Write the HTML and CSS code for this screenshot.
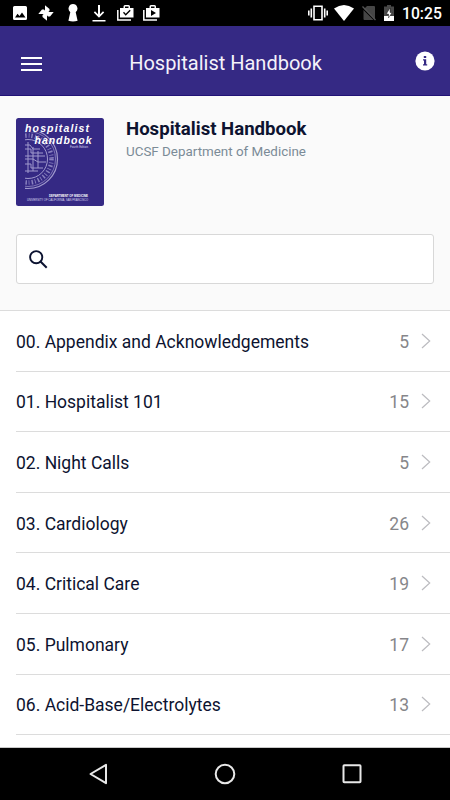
FILE: index.html
```html
<!DOCTYPE html>
<html lang="en">
<head>
<meta charset="utf-8">
<title>Hospitalist Handbook</title>
<link rel="stylesheet" href="styles.css">
</head>
<body>
<div class="status">
  <div class="status-left">
    <svg width="14" height="14" viewBox="0 0 14 14"><path fill="#fff" fill-rule="evenodd" d="M1.500 0h11A1.500 1.500 0 0 1 14 1.500v11a1.500 1.500 0 0 1-1.500 1.500h-11A1.500 1.500 0 0 1 0 12.500v-11A1.500 1.500 0 0 1 1.500 0zM2 11.500h10.500L9 6.500 6.500 10 4.500 7.800z"/></svg>
    <svg width="16" height="16" viewBox="0 0 16 16"><g fill="#fff"><path id="vane" d="M8.500 8.500H7V.3L11.500 4v2z"/><use href="#vane" transform="rotate(90 8 8)"/><use href="#vane" transform="rotate(180 8 8)"/><use href="#vane" transform="rotate(270 8 8)"/></g></svg>
    <svg width="10" height="18" viewBox="0 0 10 18"><path fill="#fff" d="M5 0a4.600 4.600 0 0 1 2.700 8.200L9.600 16.800Q5 18.300.4 16.800L2.300 8.200A4.600 4.600 0 0 1 5 0z"/></svg>
    <svg width="14" height="17" viewBox="0 0 14 17"><path fill="#fff" d="M6 0h2v9.200l3-2.900 1.200 1.200L7 12.700 1.800 7.500 3 6.300l3 2.900zM.5 15h13v1.500H.5z"/></svg>
    <svg width="17" height="16" viewBox="0 0 17 16"><path fill="#fff" fill-rule="evenodd" d="M3 3h3.500V1.500Q6.500 0 8 0h3.500Q13 0 13 1.500V3h3.500v9.500H3zM8 3h3.500V1.500H8zM6 7.800l2.700 3 5-5-1-1-4 4-1.700-2z"/><path d="M.8 5v10H14" fill="none" stroke="#fff" stroke-width="1.500"/></svg>
    <svg width="17" height="16" viewBox="0 0 17 16"><path fill="#fff" fill-rule="evenodd" d="M3 3h3.500V1.500Q6.500 0 8 0h3.500Q13 0 13 1.500V3h3.500v9.500H3zM8 3h3.500V1.500H8zM8 5v6l5-3z"/><path d="M.8 5v10H14" fill="none" stroke="#fff" stroke-width="1.500"/></svg>
  </div>
  <div class="status-right">
    <svg width="20" height="16" viewBox="0 0 20 16"><path fill="none" stroke="#fff" stroke-width="1.600" d="M6 1.300h8v13.400H6zM3.300 3.500v9M16.700 3.500v9M.8 5.500v5M19.200 5.500v5"/></svg>
    <svg width="20" height="16" viewBox="0 0 20 16"><path fill="#fff" d="M10 16 0 3.600Q10-3.400 20 3.600z"/></svg>
    <svg width="14" height="16" viewBox="0 0 14 16"><path fill="#464646" d="M5 1h7q1 0 1 1v12L2 4zM1.500 5 11.500 15h-9q-1 0-1-1z"/><path d="M.5 1.500l13 13.500" stroke="#555" stroke-width="1.300"/></svg>
    <svg width="10" height="16" viewBox="0 0 10 16"><path fill="#484848" d="M3 0h4v1.500h3V11H0V1.500h3z"/><path fill="#fff" d="M0 11h10v5H0z"/><path fill="#fff" stroke="#000" stroke-width=".4" d="M6 3 2.300 9h2.200v4L8 7.500H6z"/></svg>
    <span class="clock">10:25</span>
  </div>
</div>
<header class="bar">
  <svg class="menu" width="21" height="14" viewBox="0 0 21 14"><path fill="#fff" d="M0 0h21v2H0zM0 6h21v2H0zM0 12h21v2H0z"/></svg>
  <h1 class="title">Hospitalist Handbook</h1>
  <svg class="info" width="20" height="20" viewBox="0 0 20 20"><circle cx="10" cy="10" r="9.600" fill="#fff"/><path fill="#352984" d="M8.800 5h2.400v2H8.800zM8 8.300h3.200v5h1V14.600H8v-1.300h1V9.600H8z"/></svg>
</header>
<section class="intro">
  <div class="book">
    <svg class="cover" width="88" height="88" viewBox="0 0 88 88">
      <defs><clipPath id="half"><path d="M9 14h50v60H9z"/></clipPath></defs>
      <rect width="88" height="88" rx="2.500" fill="#352984"/>
      <g clip-path="url(#half)" fill="none" stroke="#a19acd">
        <circle cx="12" cy="41" r="29.500" stroke-width="1.200"/>
        <circle cx="12" cy="41" r="27.500" stroke-width=".7"/>
        <circle cx="12" cy="41" r="19.500" stroke-width="1"/>
        <circle cx="12" cy="41" r="23.500" stroke-width="4.500" stroke-dasharray="1.500 2.200 .8 1.800" stroke="#8a82bf"/>
        <path d="M9 27h5l3 4h7M9 31h6v4h12M9 38h20M9 41h8l5 3h8M9 46h6v4h12M9 53h13M12 24v31M17 29v24M22 33v17" stroke-width="1"/>
      </g>
      <g class="cover-name">
        <text x="9" y="13.500" textLength="64">hospitalist</text>
        <text x="18.500" y="25.500" textLength="57">handbook</text>
      </g>
      <g class="cover-small">
        <text x="54" y="30" textLength="18">Fourth Edition</text>
        <text class="cover-dept" x="33" y="79" textLength="39" lengthAdjust="spacingAndGlyphs">DEPARTMENT OF MEDICINE</text>
        <text class="cover-univ" x="11" y="82.500" textLength="61" lengthAdjust="spacingAndGlyphs">UNIVERSITY OF CALIFORNIA, SAN FRANCISCO</text>
      </g>
    </svg>
    <div class="meta">
      <h2 class="name">Hospitalist Handbook</h2>
      <p class="dept">UCSF Department of Medicine</p>
    </div>
  </div>
  <div class="search">
    <svg width="19" height="19" viewBox="0 0 19 19" fill="none" stroke="#0b1230"><circle cx="7.200" cy="7.200" r="6.100" stroke-width="1.900"/><path d="M11.500 11.500l6.200 6.300" stroke-width="2"/></svg>
  </div>
</section>
<ul class="list">
  <li class="row"><span class="label">00. Appendix and Acknowledgements</span><span class="count">5</span><svg class="chev" width="10" height="16" viewBox="0 0 10 16"><path d="M1 1l7.700 7L1 15"/></svg></li>
  <li class="row"><span class="label">01. Hospitalist 101</span><span class="count">15</span><svg class="chev" width="10" height="16" viewBox="0 0 10 16"><path d="M1 1l7.700 7L1 15"/></svg></li>
  <li class="row"><span class="label">02. Night Calls</span><span class="count">5</span><svg class="chev" width="10" height="16" viewBox="0 0 10 16"><path d="M1 1l7.700 7L1 15"/></svg></li>
  <li class="row"><span class="label">03. Cardiology</span><span class="count">26</span><svg class="chev" width="10" height="16" viewBox="0 0 10 16"><path d="M1 1l7.700 7L1 15"/></svg></li>
  <li class="row"><span class="label">04. Critical Care</span><span class="count">19</span><svg class="chev" width="10" height="16" viewBox="0 0 10 16"><path d="M1 1l7.700 7L1 15"/></svg></li>
  <li class="row"><span class="label">05. Pulmonary</span><span class="count">17</span><svg class="chev" width="10" height="16" viewBox="0 0 10 16"><path d="M1 1l7.700 7L1 15"/></svg></li>
  <li class="row"><span class="label">06. Acid-Base/Electrolytes</span><span class="count">13</span><svg class="chev" width="10" height="16" viewBox="0 0 10 16"><path d="M1 1l7.700 7L1 15"/></svg></li>
</ul>
<nav class="nav">
  <svg width="20" height="22" viewBox="0 0 20 22"><path d="M17 1.800v18.400L1.500 11z"/></svg>
  <svg class="home" width="22" height="22" viewBox="0 0 22 22"><circle cx="11" cy="11" r="9.300"/></svg>
  <svg width="20" height="22" viewBox="0 0 20 22"><rect x="1.500" y="2.300" width="17" height="17" rx=".8"/></svg>
</nav>
</body>
</html>
```
FILE: styles.css
```css
* { box-sizing: border-box; margin: 0; padding: 0; }
body {
  width: 450px;
  height: 800px;
  overflow: hidden;
  display: flex;
  flex-direction: column;
  background: #fff;
  font-family: Roboto, sans-serif;
  color: #0d1330;
}
svg { display: block; flex: none; }
.status {
  height: 26px;
  flex: none;
  display: flex;
  justify-content: space-between;
  background: #000;
  padding: 0 9px 0 13px;
}
.status-left, .status-right { display: flex; align-items: center; }
.status-left { gap: 11px; }
.status-left svg:nth-child(3) { margin-left: 3px; }
.status-left svg:nth-child(4) { margin-left: 3px; }
.status-left svg:nth-child(6) { margin-left: -2px; }
.status-right { gap: 8px; }
.status-right svg:nth-child(2) { margin-left: -2px; }
.clock {
  width: 39px;
  font-size: 15.7px;
  font-weight: 500;
  line-height: 26px;
  color: #fff;
  padding-top: 2px;
  white-space: nowrap;
}
.bar {
  height: 70px;
  flex: none;
  display: grid;
  grid-template-columns: 21px 1fr 20px;
  align-items: center;
  padding: 0 15px 0 21px;
  background: #352984;
  border-bottom: 1px solid #211276;
}
.menu { margin-top: 6px; }
.info { margin-top: 1px; }
.title {
  font-size: 20px;
  font-weight: 400;
  line-height: 28px;
  text-align: center;
  color: #f4f2fa;
  padding: 4px 6px 0 0;
}
.intro {
  height: 215px;
  flex: none;
  background: #fafafa;
  border-bottom: 1px solid #dcdcdc;
  padding: 22px 16px 0;
}
.book { display: flex; gap: 22px; height: 88px; }
.cover-name {
  font: italic bold 10.5px "Liberation Sans", sans-serif;
  fill: #fff;
}
.cover-small {
  font: 2.8px "Liberation Sans", sans-serif;
  fill: #dedaf0;
}
.cover-dept { font-weight: bold; font-size: 3.2px; fill: #fff; }
.cover-univ { font-size: 3.1px; }
.name {
  font-size: 18.6px;
  font-weight: 700;
  line-height: 22px;
}
.dept {
  font-size: 13.4px;
  line-height: 18px;
  margin-top: 3px;
  color: #7b8b97;
}
.search {
  height: 50px;
  margin-top: 28px;
  display: flex;
  align-items: center;
  padding-left: 12px;
  background: #fff;
  border: 1px solid #d8d8d8;
  border-radius: 3px;
}
.list {
  list-style: none;
  flex: 1;
  min-height: 0;
  overflow: hidden;
  border-bottom: 1px solid #c8c8c8;
}
.row {
  height: 60.6px;
  margin-left: 16px;
  padding-right: 19px;
  display: flex;
  align-items: center;
  border-bottom: 1px solid #dcdcdc;
  font-size: 17.5px;
}
.label { flex: 1; white-space: nowrap; padding-top: 2px; }
.count { color: #86868a; margin-right: 12px; padding-top: 2px; }
.chev { fill: none; stroke: #bcbcc0; stroke-width: 1.200; }
.nav {
  height: 52px;
  flex: none;
  display: flex;
  justify-content: space-between;
  align-items: center;
  padding: 0 88px 0 89px;
  background: #000;
}
.nav svg {
  fill: none;
  stroke: #e8e8e8;
  stroke-width: 2;
  stroke-linejoin: round;
}
.nav .home { margin-right: 2px; }
```
